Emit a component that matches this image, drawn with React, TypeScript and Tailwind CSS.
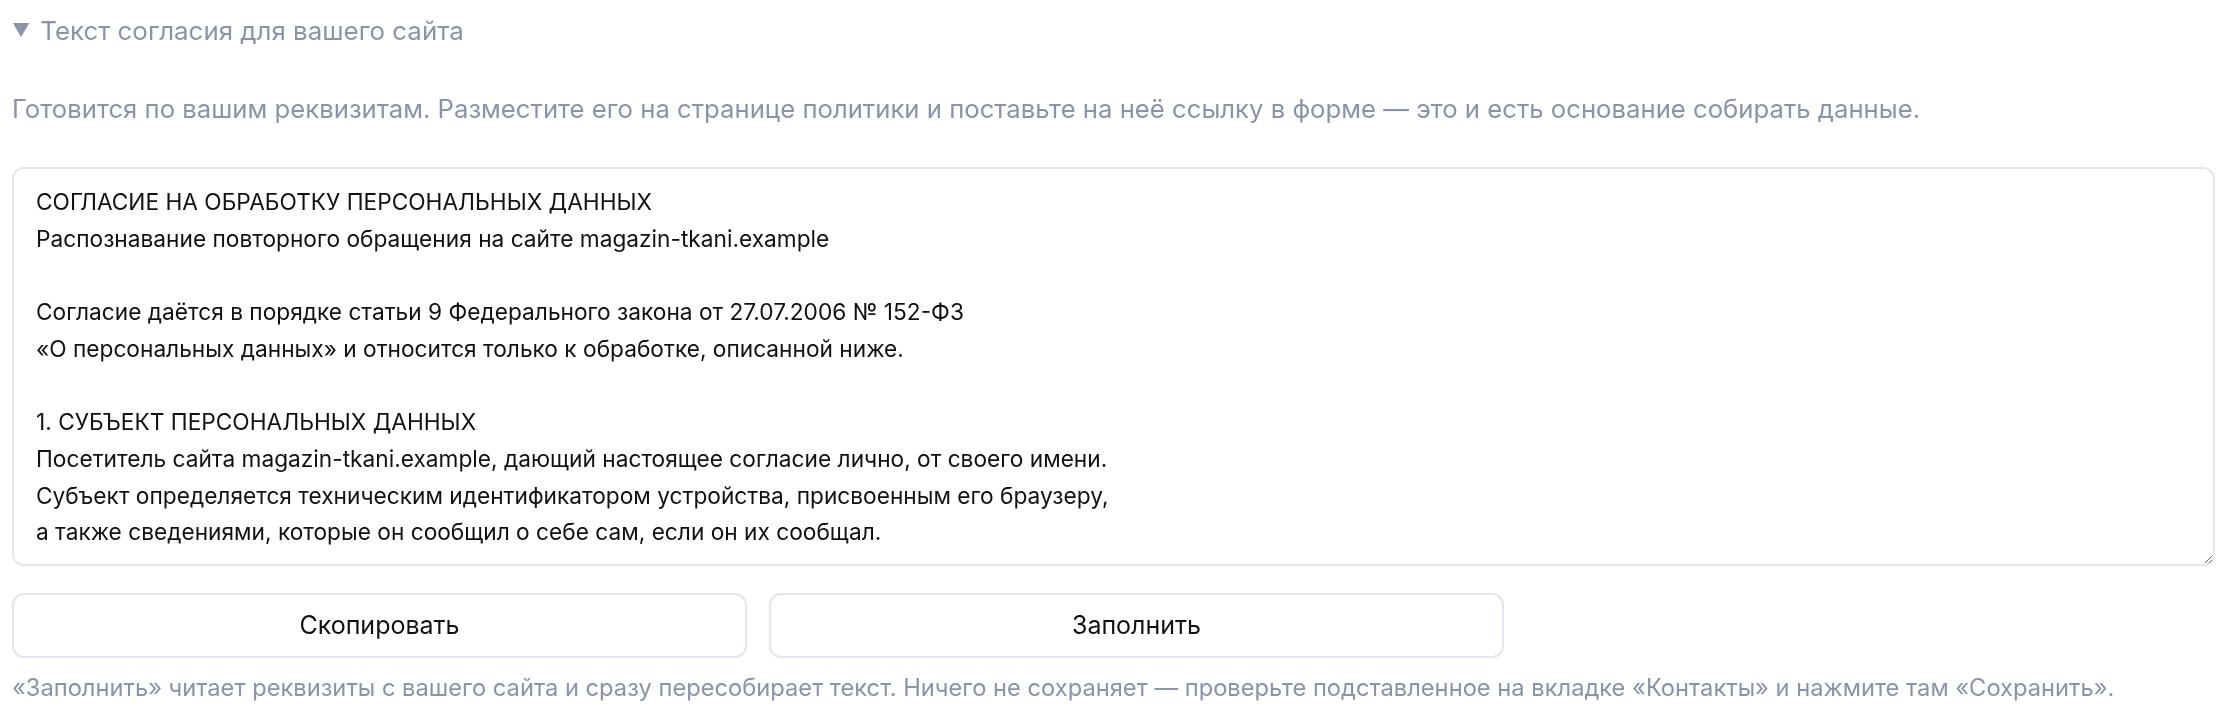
import { useState } from "react";

const consentText = `СОГЛАСИЕ НА ОБРАБОТКУ ПЕРСОНАЛЬНЫХ ДАННЫХ
Распознавание повторного обращения на сайте magazin-tkani.example

Согласие даётся в порядке статьи 9 Федерального закона от 27.07.2006 № 152-ФЗ
«О персональных данных» и относится только к обработке, описанной ниже.

1. СУБЪЕКТ ПЕРСОНАЛЬНЫХ ДАННЫХ
Посетитель сайта magazin-tkani.example, дающий настоящее согласие лично, от своего имени.
Субъект определяется техническим идентификатором устройства, присвоенным его браузеру,
а также сведениями, которые он сообщил о себе сам, если он их сообщал.

2. ОПЕРАТОР
Сведения об операторе указываются по реквизитам сайта.`;

export default function App() {
  const [open, setOpen] = useState(true);

  return (
    <div className="min-h-screen bg-white px-[12px] pt-[14px] font-['Inter',sans-serif]">
      <button
        onClick={() => setOpen((o) => !o)}
        className="flex items-center gap-[10px] text-[25.9px] leading-[34px] text-[#8a93a8]"
      >
        <span className="text-[18px]">▼</span>
        Текст согласия для вашего сайта
      </button>

      {open && (
        <>
          <p className="mt-[44px] text-[25.7px] leading-[34px] text-[#8a93a8]">
            Готовится по вашим реквизитам. Разместите его на странице политики и поставьте на неё ссылку в форме — это и есть основание собирать данные.
          </p>

          <textarea
            readOnly
            defaultValue={consentText}
            className="mt-[41px] block h-[399px] w-[2203px] rounded-[12px] border-2 border-[#e3e6f1] bg-white px-[22px] pt-[15px] text-[22.7px] leading-[36.7px] text-[#111] outline-none [scrollbar-width:none]"
          />

          <div className="mt-[27px] flex gap-[22px]">
            <button className="h-[65px] w-[735px] rounded-[12px] border-2 border-[#e3e6f1] bg-white text-[25px] text-[#111]">
              Скопировать
            </button>
            <button className="h-[65px] w-[735px] rounded-[12px] border-2 border-[#e3e6f1] bg-white text-[25px] text-[#111]">
              Заполнить
            </button>
          </div>

          <p className="mt-[13px] text-[23.7px] leading-[34px] text-[#8a93a8]">
            «Заполнить» читает реквизиты с вашего сайта и сразу пересобирает текст. Ничего не сохраняет — проверьте подставленное на вкладке «Контакты» и нажмите там «Сохранить».
          </p>
        </>
      )}
    </div>
  );
}
